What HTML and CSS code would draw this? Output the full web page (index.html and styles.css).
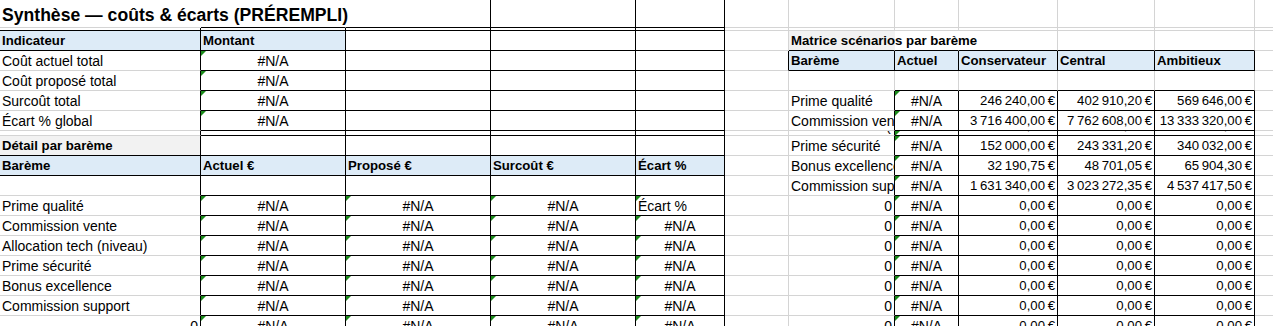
FILE: index.html
```html
<!DOCTYPE html>
<html lang="fr">
<head>
<meta charset="utf-8">
<title>Synthèse — coûts &amp; écarts</title>
<link rel="stylesheet" href="styles.css">
</head>
<body>
<div class="sheet">
  <div class="row h28">
    <div class="c ov nr title">Synthèse — coûts &amp; écarts (PRÉREMPLI)</div>
    <div class="c nr B"></div>
    <div class="c R B"></div>
    <div class="c R B"></div>
    <div class="c R B"></div>
    <div class="c"></div><div class="c"></div><div class="c"></div><div class="c"></div><div class="c"></div><div class="c"></div><div class="c"></div>
  </div>
  <div class="row h3">
    <div class="c R B"></div><div class="c R B"></div><div class="c R B"></div><div class="c R B"></div><div class="c R B"></div>
    <div class="c"></div><div class="c"></div><div class="c"></div><div class="c"></div><div class="c"></div><div class="c"></div><div class="c"></div>
  </div>
  <div class="row">
    <div class="c hd R B">Indicateur</div>
    <div class="c hd R B">Montant</div>
    <div class="c R B"></div><div class="c R B"></div><div class="c R B"></div>
    <div class="c"></div>
    <div class="c sec ov nr B">Matrice scénarios par barème</div>
    <div class="c nr B"></div>
    <div class="c B"></div><div class="c B"></div><div class="c B"></div>
    <div class="c"></div>
  </div>
  <div class="row">
    <div class="c R">Coût actuel total</div>
    <div class="c ctr err R B">#N/A</div>
    <div class="c R B"></div><div class="c R B"></div><div class="c R B"></div>
    <div class="c R"></div>
    <div class="c hd R B">Barème</div>
    <div class="c hd R B">Actuel</div>
    <div class="c hd R B">Conservateur</div>
    <div class="c hd R B">Central</div>
    <div class="c hd R B">Ambitieux</div>
    <div class="c"></div>
  </div>
  <div class="row">
    <div class="c R">Coût proposé total</div>
    <div class="c ctr err R B">#N/A</div>
    <div class="c R B"></div><div class="c R B"></div><div class="c R B"></div>
    <div class="c"></div>
    <div class="c"></div>
    <div class="c B"></div><div class="c B"></div><div class="c B"></div><div class="c B"></div>
    <div class="c"></div>
  </div>
  <div class="row">
    <div class="c R">Surcoût total</div>
    <div class="c ctr err R B">#N/A</div>
    <div class="c R B"></div><div class="c R B"></div><div class="c R B"></div>
    <div class="c"></div>
    <div class="c R">Prime qualité</div>
    <div class="c ctr err R B">#N/A</div>
    <div class="c num R B">246&#8201;240,00&#8201;€</div>
    <div class="c num R B">402&#8201;910,20&#8201;€</div>
    <div class="c num R B">569&#8201;646,00&#8201;€</div>
    <div class="c"></div>
  </div>
  <div class="row">
    <div class="c R">Écart % global</div>
    <div class="c ctr err R B">#N/A</div>
    <div class="c R B"></div><div class="c R B"></div><div class="c R B"></div>
    <div class="c"></div>
    <div class="c R">Commission vente</div>
    <div class="c ctr err R B">#N/A</div>
    <div class="c num R B">3&#8201;716&#8201;400,00&#8201;€</div>
    <div class="c num R B">7&#8201;762&#8201;608,00&#8201;€</div>
    <div class="c num R B">13&#8201;333&#8201;320,00&#8201;€</div>
    <div class="c"></div>
  </div>
  <div class="row h5">
    <div class="c R"></div>
    <div class="c R B"></div><div class="c R B"></div><div class="c R B"></div><div class="c R B"></div>
    <div class="c"></div>
    <div class="c R">Allocation tech (niveau)</div>
    <div class="c ctr err R B">#N/A</div>
    <div class="c num R B">1&#8201;180&#8201;000,00&#8201;€</div>
    <div class="c num R B">2&#8201;214&#8201;560,00&#8201;€</div>
    <div class="c num R B">3&#8201;452&#8201;800,00&#8201;€</div>
    <div class="c"></div>
  </div>
  <div class="row">
    <div class="c sec R B">Détail par barème</div>
    <div class="c R B"></div><div class="c R B"></div><div class="c R B"></div><div class="c R B"></div>
    <div class="c"></div>
    <div class="c R">Prime sécurité</div>
    <div class="c ctr err R B">#N/A</div>
    <div class="c num R B">152&#8201;000,00&#8201;€</div>
    <div class="c num R B">243&#8201;331,20&#8201;€</div>
    <div class="c num R B">340&#8201;032,00&#8201;€</div>
    <div class="c"></div>
  </div>
  <div class="row">
    <div class="c hd R B">Barème</div>
    <div class="c hd R B">Actuel €</div>
    <div class="c hd R B">Proposé €</div>
    <div class="c hd R B">Surcoût €</div>
    <div class="c hd R B">Écart %</div>
    <div class="c"></div>
    <div class="c R">Bonus excellence</div>
    <div class="c ctr err R B">#N/A</div>
    <div class="c num R B">32&#8201;190,75&#8201;€</div>
    <div class="c num R B">48&#8201;701,05&#8201;€</div>
    <div class="c num R B">65&#8201;904,30&#8201;€</div>
    <div class="c"></div>
  </div>
  <div class="row">
    <div class="c R"></div>
    <div class="c R B"></div><div class="c R B"></div><div class="c R B"></div><div class="c R B"></div>
    <div class="c"></div>
    <div class="c R">Commission support</div>
    <div class="c ctr err R B">#N/A</div>
    <div class="c num R B">1&#8201;631&#8201;340,00&#8201;€</div>
    <div class="c num R B">3&#8201;023&#8201;272,35&#8201;€</div>
    <div class="c num R B">4&#8201;537&#8201;417,50&#8201;€</div>
    <div class="c"></div>
  </div>
  <div class="row">
    <div class="c R">Prime qualité</div>
    <div class="c ctr err R B">#N/A</div>
    <div class="c ctr err R B">#N/A</div>
    <div class="c ctr err R B">#N/A</div>
    <div class="c err R B">Écart %</div>
    <div class="c"></div>
    <div class="c rt R">0</div>
    <div class="c ctr err R B">#N/A</div>
    <div class="c num R B">0,00&#8201;€</div><div class="c num R B">0,00&#8201;€</div><div class="c num R B">0,00&#8201;€</div>
    <div class="c"></div>
  </div>
  <div class="row">
    <div class="c R">Commission vente</div>
    <div class="c ctr err R B">#N/A</div>
    <div class="c ctr err R B">#N/A</div>
    <div class="c ctr err R B">#N/A</div>
    <div class="c ctr err R B">#N/A</div>
    <div class="c"></div>
    <div class="c rt R">0</div>
    <div class="c ctr err R B">#N/A</div>
    <div class="c num R B">0,00&#8201;€</div><div class="c num R B">0,00&#8201;€</div><div class="c num R B">0,00&#8201;€</div>
    <div class="c"></div>
  </div>
  <div class="row">
    <div class="c R">Allocation tech (niveau)</div>
    <div class="c ctr err R B">#N/A</div>
    <div class="c ctr err R B">#N/A</div>
    <div class="c ctr err R B">#N/A</div>
    <div class="c ctr err R B">#N/A</div>
    <div class="c"></div>
    <div class="c rt R">0</div>
    <div class="c ctr err R B">#N/A</div>
    <div class="c num R B">0,00&#8201;€</div><div class="c num R B">0,00&#8201;€</div><div class="c num R B">0,00&#8201;€</div>
    <div class="c"></div>
  </div>
  <div class="row">
    <div class="c R">Prime sécurité</div>
    <div class="c ctr err R B">#N/A</div>
    <div class="c ctr err R B">#N/A</div>
    <div class="c ctr err R B">#N/A</div>
    <div class="c ctr err R B">#N/A</div>
    <div class="c"></div>
    <div class="c rt R">0</div>
    <div class="c ctr err R B">#N/A</div>
    <div class="c num R B">0,00&#8201;€</div><div class="c num R B">0,00&#8201;€</div><div class="c num R B">0,00&#8201;€</div>
    <div class="c"></div>
  </div>
  <div class="row">
    <div class="c R">Bonus excellence</div>
    <div class="c ctr err R B">#N/A</div>
    <div class="c ctr err R B">#N/A</div>
    <div class="c ctr err R B">#N/A</div>
    <div class="c ctr err R B">#N/A</div>
    <div class="c"></div>
    <div class="c rt R">0</div>
    <div class="c ctr err R B">#N/A</div>
    <div class="c num R B">0,00&#8201;€</div><div class="c num R B">0,00&#8201;€</div><div class="c num R B">0,00&#8201;€</div>
    <div class="c"></div>
  </div>
  <div class="row">
    <div class="c R">Commission support</div>
    <div class="c ctr err R B">#N/A</div>
    <div class="c ctr err R B">#N/A</div>
    <div class="c ctr err R B">#N/A</div>
    <div class="c ctr err R B">#N/A</div>
    <div class="c"></div>
    <div class="c rt R">0</div>
    <div class="c ctr err R B">#N/A</div>
    <div class="c num R B">0,00&#8201;€</div><div class="c num R B">0,00&#8201;€</div><div class="c num R B">0,00&#8201;€</div>
    <div class="c"></div>
  </div>
  <div class="row">
    <div class="c rt R">0</div>
    <div class="c ctr err R B">#N/A</div>
    <div class="c ctr err R B">#N/A</div>
    <div class="c ctr err R B">#N/A</div>
    <div class="c ctr err R B">#N/A</div>
    <div class="c"></div>
    <div class="c rt R">0</div>
    <div class="c ctr err R B">#N/A</div>
    <div class="c num R B">0,00&#8201;€</div><div class="c num R B">0,00&#8201;€</div><div class="c num R B">0,00&#8201;€</div>
    <div class="c"></div>
  </div>
</div>
</body>
</html>
```

FILE: styles.css
```css
* { box-sizing: border-box; }
html, body { margin: 0; padding: 0; background: #fff; }
body {
  overflow: hidden;
  font-family: "Liberation Sans", Arial, sans-serif;
  font-size: 14px;
  color: #000;
}
.sheet {
  display: flex;
  flex-direction: column;
  width: 1273px;
  overflow: hidden;
}
.row {
  display: grid;
  grid-template-columns: 201px 145px 145px 145px 89px 64px 106px 64px 99px 97px 100px 19px;
  height: 20px;
}
.row.h28 { height: 28px; }
.row.h3 { height: 3px; }
.row.h5 { height: 5px; }

.c {
  position: relative;
  min-width: 0;
  border-right: 1px solid #d4d4d4;
  border-bottom: 1px solid #d4d4d4;
  overflow: hidden;
  white-space: nowrap;
  display: flex;
  align-items: flex-end;
  padding: 0 2px 1px 2px;
  line-height: 16px;
}
.R { border-right-color: #000; }
.B { border-bottom-color: #000; }
.nr { border-right-color: transparent; }
.ov { overflow: visible; z-index: 1; }
.hd { background: #ddebf7; font-weight: bold; font-size: 13.2px; }
.sec { background: #f2f2f2; font-weight: bold; font-size: 13.2px; }
.ctr { justify-content: center; }
.rt { justify-content: flex-end; }
.num { justify-content: flex-end; font-size: 13.2px; }
.title {
  font-size: 17.6px;
  font-weight: bold;
  line-height: 20px;
  padding-bottom: 2px;
}
.err::before {
  content: "";
  position: absolute;
  left: 0;
  top: 0;
  width: 0;
  height: 0;
  border-top: 5px solid #1b8a1b;
  border-right: 5px solid transparent;
}
```
